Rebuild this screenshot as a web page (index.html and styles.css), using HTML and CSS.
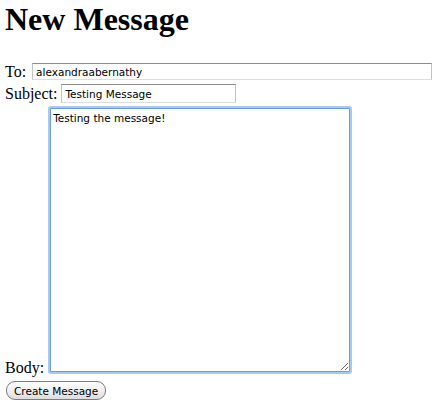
FILE: index.html
```html
<!DOCTYPE html>
<html>

<head>
    <meta charset="utf-8">
    <title>New Message</title>
    <link rel="stylesheet" href="styles.css">
</head>

<body>
    <h1>New Message</h1>
    <form class="message-form">
        <div class="row row-to">
            <label for="to">To:</label>
            <input type="text" id="to" class="field field-to" value="alexandraabernathy">
        </div>
        <div class="row row-subject">
            <label for="subject">Subject:</label>
            <input type="text" id="subject" class="field field-subject" value="Testing Message">
        </div>
        <div class="row row-body">
            <label for="body">Body:</label>
            <textarea id="body" class="body-text">Testing the message!</textarea>
        </div>
        <button type="button" class="create-btn">Create Message</button>
    </form>
</body>

</html>
```

FILE: styles.css
```css
body {
    font-family: "Liberation Serif", "Times New Roman", serif;
    font-size: 16px;
    margin: 1px 5px;
    background-color: #fff;
    color: #000;
}

h1 {
    font-size: 32px;
    line-height: 37px;
    margin: 0 0 22px 0;
}

.message-form {
    margin: 0;
}

.row {
    display: flex;
    align-items: center;
    gap: 4px;
}

.row-to {
    height: 23px;
}

.row-subject {
    height: 21px;
}

.row-body {
    align-items: flex-end;
}

.field {
    box-sizing: border-box;
    margin: 0;
    padding: 0 3px;
    font-family: "DejaVu Sans", sans-serif;
    font-size: 10.5px;
    color: #000;
    background: #fff;
    border: 1px solid #c3c3c3;
    border-top-color: #8c8c8c;
    border-bottom-color: #dedede;
    border-radius: 0;
    outline: none;
}

.field-to {
    width: 400px;
    height: 17px;
    margin-left: 2px;
}

.field-subject {
    width: 175px;
    height: 19px;
}

.body-text {
    box-sizing: border-box;
    width: 300px;
    height: 264px;
    margin: 4px 0 5px 2px;
    padding: 3px 2px;
    font-family: "DejaVu Sans", sans-serif;
    font-size: 10.5px;
    color: #000;
    border: 1px solid #6d9cd6;
    border-radius: 1px;
    box-shadow: 0 0 0 2px #a7c8ef;
    outline: none;
    resize: both;
}

.create-btn {
    display: block;
    box-sizing: border-box;
    height: 19px;
    margin: 4px 0 0 1px;
    padding: 0 7px;
    font-family: "DejaVu Sans", sans-serif;
    font-size: 10.5px;
    color: #000;
    background: linear-gradient(#ffffff, #f0f0f0 50%, #dcdcdc);
    border: 1px solid #7d7d7d;
    border-radius: 9px;
}
```
